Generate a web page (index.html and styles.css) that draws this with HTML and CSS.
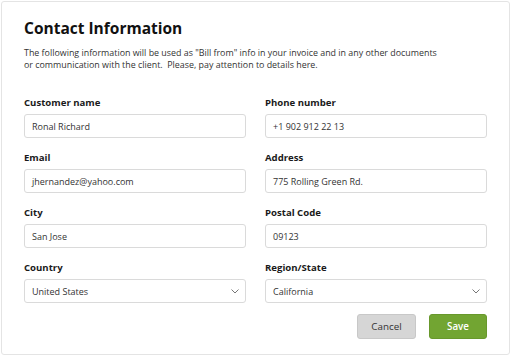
FILE: index.html
```html
<!DOCTYPE html>
<html lang="en">
  <head>
    <meta charset="UTF-8" />
    <title>Contact Information</title>
    <link rel="stylesheet" href="styles.css">
  </head>
  <body>
    <div class="card">
      <h1 class="title">Contact Information</h1>
      <p class="intro">
        The following information will be used as "Bill from" info in your invoice and in any other documents<br />
        or communication with the client.&nbsp; Please, pay attention to details here.
      </p>
      <form class="form">
        <div class="field">
          <label>Customer name</label>
          <div class="input">Ronal Richard</div>
        </div>
        <div class="field">
          <label>Phone number</label>
          <div class="input">+1 902 912 22 13</div>
        </div>
        <div class="field">
          <label>Email</label>
          <div class="input">jhernandez@yahoo.com</div>
        </div>
        <div class="field">
          <label>Address</label>
          <div class="input">775 Rolling Green Rd.</div>
        </div>
        <div class="field">
          <label>City</label>
          <div class="input">San Jose</div>
        </div>
        <div class="field">
          <label>Postal Code</label>
          <div class="input">09123</div>
        </div>
        <div class="field">
          <label>Country</label>
          <div class="input select">
            United States
            <svg class="chevron" viewBox="0 0 8 5"><path d="M0.5 0.5l3.5 3.5 3.5-3.5" /></svg>
          </div>
        </div>
        <div class="field">
          <label>Region/State</label>
          <div class="input select">
            California
            <svg class="chevron" viewBox="0 0 8 5"><path d="M0.5 0.5l3.5 3.5 3.5-3.5" /></svg>
          </div>
        </div>
      </form>
      <div class="actions">
        <button class="button cancel-button">Cancel</button>
        <button class="button save-button">Save</button>
      </div>
    </div>
  </body>
</html>
```

FILE: styles.css
```css
* {
  box-sizing: border-box;
}

body {
  font-family: "Open Sans", sans-serif;
  background: #ffffff;
  color: #222;
  margin: 0;
  padding: 1px 2px 2px 1px;
}

.card {
  height: 354px;
  border: 1px solid #e4e4e4;
  border-radius: 3px;
  padding: 15px 22px 10px 22px;
}

.title {
  font-size: 15.5px;
  font-weight: 700;
  color: #111;
  margin: 0;
  line-height: 22px;
}

.intro {
  font-size: 8.9px;
  line-height: 11.5px;
  color: #333;
  margin: 8px 0 0 0;
  white-space: nowrap;
}

.form {
  display: grid;
  grid-template-columns: 222px 222px;
  column-gap: 19px;
  row-gap: 13px;
  margin-top: 26px;
}

.field label {
  display: block;
  font-size: 9.6px;
  font-weight: 700;
  color: #1a1a1a;
  line-height: 13px;
  margin-bottom: 5px;
}

.input {
  height: 24px;
  border: 1px solid #dadada;
  border-radius: 3px;
  padding: 0 6px 0 7px;
  font-size: 9px;
  color: #333;
  display: flex;
  align-items: center;
  justify-content: space-between;
}

.chevron {
  width: 8px;
  height: 5px;
  fill: none;
  stroke: #777;
  stroke-width: 1;
}

.actions {
  display: flex;
  justify-content: flex-end;
  gap: 13px;
  margin-top: 11px;
}

.button {
  width: 59px;
  height: 25px;
  border-radius: 3px;
  font-family: "Open Sans", sans-serif;
  font-size: 9.8px;
  cursor: pointer;
}

.cancel-button {
  background: #d6d6d6;
  border: 1px solid #c8c8c8;
  color: #333;
}

.save-button {
  width: 58px;
  background: #72a532;
  border: 1px solid #68982c;
  color: #ffffff;
  font-weight: 600;
}
```
